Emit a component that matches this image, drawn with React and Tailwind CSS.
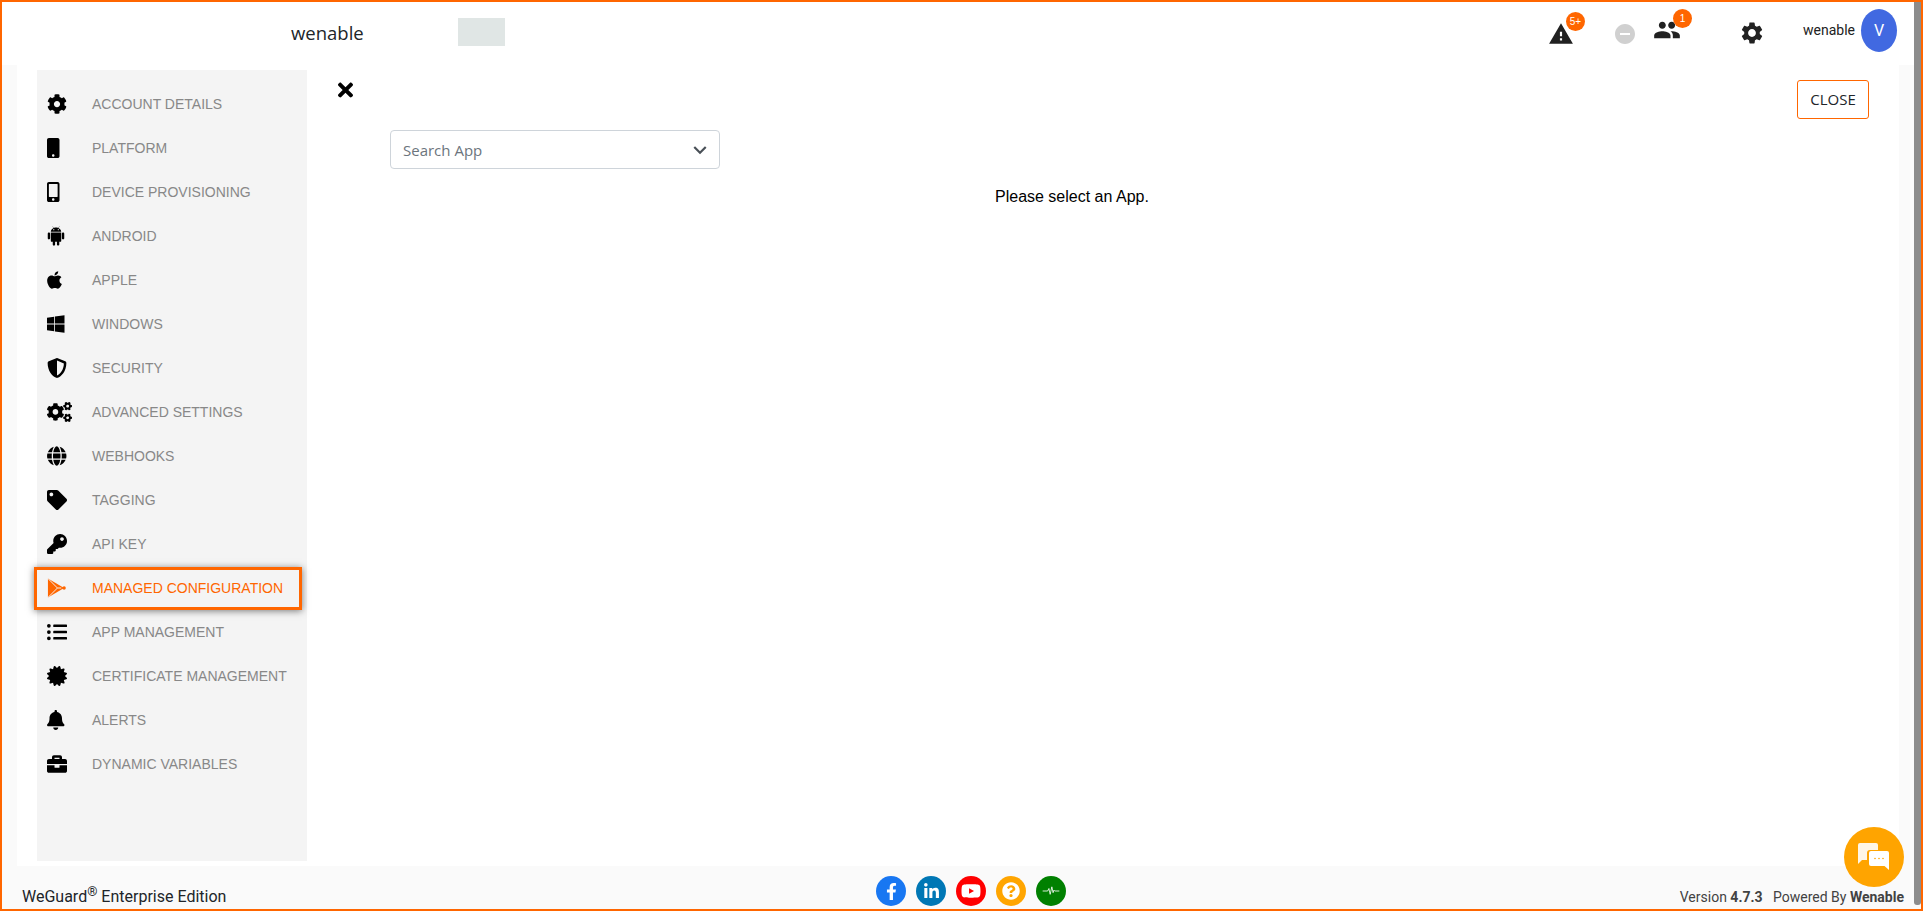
import React from 'react';
import {
  FaCog, FaMobile, FaMobileAlt, FaApple, FaWindows, FaShieldAlt, FaCogs, FaGlobe, FaTag, FaKey,
  FaListUl, FaCertificate, FaBell, FaBriefcase, FaTimes, FaFacebookF, FaLinkedinIn, FaYoutube, FaQuestionCircle,
} from 'react-icons/fa';
import { AiFillAndroid } from 'react-icons/ai';
import { MdWarning, MdPeople, MdSettings, MdRemoveCircle, MdKeyboardArrowDown } from 'react-icons/md';

// play-store style mark used on the active row
const PlayIcon = ({ className }) => (
  <svg viewBox="0 0 20 20" className={className}>
    <path d="M1 0 L18 10 L1 20 Z" fill="#ff6600" />
    <path d="M1 0 L11 10 L1 20" fill="none" stroke="#f4f4f4" strokeWidth="1" />
    <path d="M11 10 L15 10" stroke="#f4f4f4" strokeWidth="1" />
    <circle cx="18" cy="10" r="1.8" fill="#ff6600" />
  </svg>
);

const ChatIcon = () => (
  <svg viewBox="0 0 32 28" className="h-[28px] w-[32px]">
    <path d="M2 0 H18 a2 2 0 0 1 2 2 V7 H12 a3 3 0 0 0 -3 3 V17 L4 17 L0 21 V2 a2 2 0 0 1 2 -2 Z" fill="#fff" opacity="0.9" />
    <path d="M13 8 H29 a2 2 0 0 1 2 2 V27 L26.5 23 H13 a2 2 0 0 1 -2 -2 V10 a2 2 0 0 1 2 -2 Z" fill="#fff" />
    <circle cx="17" cy="15.5" r="0.8" fill="#ffa400" />
    <circle cx="21" cy="15.5" r="0.8" fill="#ffa400" />
    <circle cx="25" cy="15.5" r="0.8" fill="#ffa400" />
  </svg>
);

const PulseIcon = () => (
  <svg viewBox="0 0 20 12" className="h-[10px] w-[18px]" fill="none" stroke="#fff" strokeWidth="1">
    <path d="M0 6 H6 L7.5 3 L9 10 L11 1 L12.5 8 L13.5 5 L14.5 6 H20" />
  </svg>
);

const navItems = [
  { label: 'ACCOUNT DETAILS', icon: FaCog, cls: 'h-[20px] w-[20px]' },
  { label: 'PLATFORM', icon: FaMobile, cls: 'h-[20px] w-[12.5px]' },
  { label: 'DEVICE PROVISIONING', icon: FaMobileAlt, cls: 'h-[20px] w-[12.5px]' },
  { label: 'ANDROID', icon: AiFillAndroid, cls: '-ml-[2px] h-[22px] w-[22px]' },
  { label: 'APPLE', icon: FaApple, cls: 'h-[20px] w-[15px]' },
  { label: 'WINDOWS', icon: FaWindows, cls: 'h-[20px] w-[17.5px]' },
  { label: 'SECURITY', icon: FaShieldAlt, cls: 'h-[20px] w-[20px]' },
  { label: 'ADVANCED SETTINGS', icon: FaCogs, cls: 'h-[20px] w-[25px]' },
  { label: 'WEBHOOKS', icon: FaGlobe, cls: 'h-[20px] w-[19.5px]' },
  { label: 'TAGGING', icon: FaTag, cls: 'h-[20px] w-[20px]' },
  { label: 'API KEY', icon: FaKey, cls: 'h-[20px] w-[20px]' },
  { label: 'MANAGED CONFIGURATION', icon: PlayIcon, cls: 'h-[20px] w-[19px]', active: true },
  { label: 'APP MANAGEMENT', icon: FaListUl, cls: 'h-[20px] w-[20px]' },
  { label: 'CERTIFICATE MANAGEMENT', icon: FaCertificate, cls: 'h-[20px] w-[20px]' },
  { label: 'ALERTS', icon: FaBell, cls: 'h-[20px] w-[17.5px]' },
  { label: 'DYNAMIC VARIABLES', icon: FaBriefcase, cls: 'h-[20px] w-[20px]' },
];

const socials = [
  { bg: 'bg-[#1877f2]', node: <FaFacebookF className="h-[17px] w-[11px] text-white" /> },
  { bg: 'bg-[#0077b5]', node: <FaLinkedinIn className="h-[17px] w-[15px] text-white" /> },
  { bg: 'bg-[#ff0000]', node: <FaYoutube className="h-[18px] w-[20px] text-white" /> },
  { bg: 'bg-[#ffa500]', node: <FaQuestionCircle className="h-[18px] w-[18px] text-white" /> },
  { bg: 'bg-[#008000]', node: <PulseIcon /> },
];

const Badge = ({ children, className }) => (
  <span className={`absolute flex h-[19px] w-[19px] items-center justify-center rounded-full bg-[#ff6600] text-[10px] text-white ${className}`}>
    {children}
  </span>
);

export default function App() {
  return (
    <div className="flex h-[911px] w-full overflow-hidden border-2 border-[#ff6600] bg-[#fafafa] font-['Liberation_Sans',sans-serif]">
      <div className="flex min-w-0 flex-1 flex-col">
        {/* HEADER */}
        <header className="flex h-[63px] shrink-0 items-start bg-white">
          <div className="ml-[289px] mt-[18px] w-[167px] font-['Open_Sans',sans-serif] text-[18.5px] leading-[25px] text-[#212529]">wenable</div>
          <div className="mt-[16px] h-[28px] w-[47px] bg-[#e0e6e5]" />
          <div className="relative ml-[1043px] mt-[19px] text-[#212121]">
            <MdWarning className="h-[26px] w-[26px]" />
            <Badge className="-top-[9px] left-[18px]">5+</Badge>
          </div>
          <MdRemoveCircle className="ml-[39px] mt-[20px] h-[24px] w-[24px] text-[#d0d0d0]" />
          <div className="relative ml-[16px] mt-[14px] text-[#212121]">
            <MdPeople className="h-[28px] w-[28px]" />
            <Badge className="-top-[7px] left-[20px]">1</Badge>
          </div>
          <MdSettings className="ml-[58px] mt-[18px] h-[26px] w-[26px] text-[#212121]" />
          <div className="ml-[38px] mt-[18px] font-['Roboto',sans-serif] text-[14px] leading-[20px] text-[#212121]">wenable</div>
          <div className="ml-[6px] mt-[7px] flex h-[43px] w-[36px] items-center justify-center rounded-[50%] bg-[#4169e1] font-['Roboto',sans-serif] text-[16px] text-white">V</div>
        </header>

        {/* MAIN */}
        <div className="flex min-h-0 flex-1 pl-[15px] pr-[15px]">
          <div className="flex flex-1 bg-white py-[5px] pl-[20px]">
            <aside className="h-full w-[270px] shrink-0 bg-[#f4f4f4] pt-[12px]">
              {navItems.map((item) => {
                const Icon = item.icon;
                return (
                  <div key={item.label} className={`relative flex h-[44px] items-center pl-[10px] text-[14px] ${item.active ? 'text-[#ff6600]' : 'text-[#888888]'}`}>
                    <div className={`w-[45px] shrink-0 ${item.active ? '' : 'text-black'}`}>
                      <Icon className={item.cls} />
                    </div>
                    <span>{item.label}</span>
                    {item.active && (
                      <div className="absolute -left-[3px] top-[1px] h-[43px] w-[268px] border-[3px] border-[#ff6600] shadow-[0_1px_7px_rgba(0,0,0,0.5)]" />
                    )}
                  </div>
                );
              })}
            </aside>

            <main className="relative flex-1 pt-[8px]">
              <div className="flex items-start justify-between pl-[31px] pr-[30px]">
                <FaTimes className="mt-[1px] h-[22px] w-[15px] text-black" />
                <button className="mt-[2px] flex h-[39px] w-[72px] items-center justify-center rounded-[3px] border border-[#ff6600] bg-white font-['Open_Sans',sans-serif] text-[15px] text-[#212529]">
                  CLOSE
                </button>
              </div>
              <div className="ml-[83px] mt-[11px] flex h-[39px] w-[330px] items-center justify-between rounded-[4px] border border-[#ced4da] bg-white pl-[12px] pr-[6px] font-['Open_Sans',sans-serif] text-[15px] text-[#6c757d]">
                <span className="pt-[1px]">Search App</span>
                <MdKeyboardArrowDown className="h-[26px] w-[26px] text-[#495057]" />
              </div>
              <p className="mt-[18px] pl-[688px] text-[16px] leading-[20px] text-black">Please select an App.</p>
            </main>
          </div>
        </div>

        {/* FOOTER */}
        <footer className="relative flex h-[43px] shrink-0 items-end pl-[20px] pr-[10px] font-['Roboto',sans-serif] text-[#424242]">
          <div className="mb-[1px] w-[854px] text-[16px] leading-[22px] text-[#212529]">
            WeGuard<sup className="text-[13px]">®</sup> Enterprise Edition
          </div>
          <div className="mb-[3px] flex gap-[10px]">
            {socials.map((s, i) => (
              <div key={i} className={`flex h-[30px] w-[30px] items-center justify-center rounded-full ${s.bg}`}>{s.node}</div>
            ))}
          </div>
          <div className="mb-[2px] ml-auto text-[14px] leading-[20px]">
            Version <b>4.7.3</b>&nbsp;&nbsp; Powered By <b>Wenable</b>
          </div>
          <div className="absolute -top-[39px] right-[10px] flex h-[60px] w-[60px] items-center justify-center rounded-full bg-[#ffa400]">
            <ChatIcon />
          </div>
        </footer>
      </div>
      {/* scrollbar */}
      <div className="mb-[4px] w-[7px] shrink-0 rounded-b-[3px] bg-[#8c8c8c]" />
    </div>
  );
}
